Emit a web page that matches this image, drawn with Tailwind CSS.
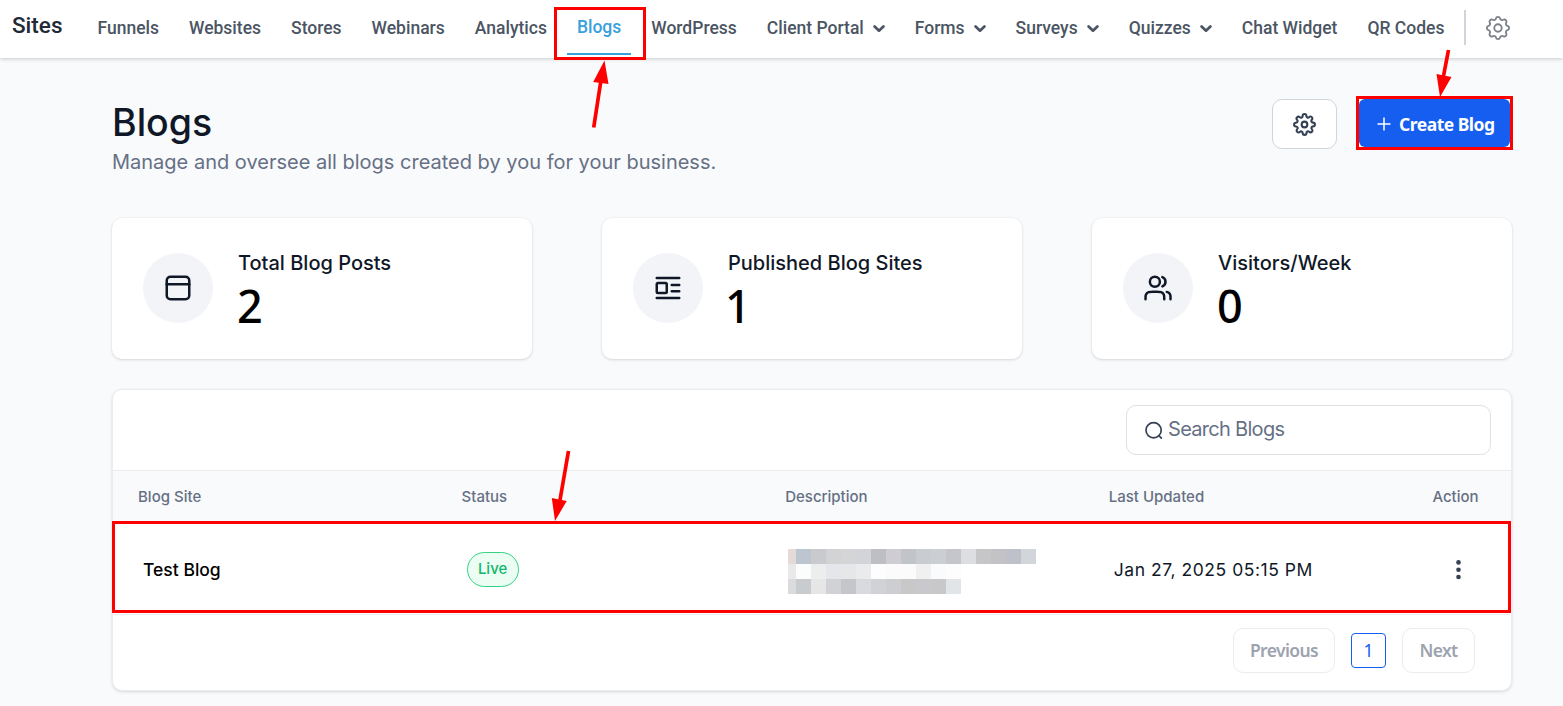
<!DOCTYPE html>
<html lang="en">
<head>
    <meta charset="UTF-8">
    <meta name="viewport" content="width=device-width, initial-scale=1.0">
    <title>Blogs - Sites</title>
    <script src="https://cdn.jsdelivr.net/npm/@tailwindcss/browser@4"></script>
</head>
<body class="relative h-[706px] overflow-hidden bg-[#f9fafb] font-['Inter',sans-serif] text-[#101828]">
    <!-- Top navigation -->
    <header class="relative flex h-[58px] items-center bg-white pl-3 font-['Roboto',sans-serif] shadow-[0_1px_4px_rgba(0,0,0,0.2)]">
        <div class="w-[85.5px] pb-[7px] text-[22.5px] font-medium text-[#1f2937]">Sites</div>
        <nav class="flex items-center gap-[30px] whitespace-nowrap pb-px text-[17.5px] font-medium text-[#4b5563]">
            <a href="#">Funnels</a>
            <a href="#">Websites</a>
            <a href="#">Stores</a>
            <a href="#">Webinars</a>
            <a href="#">Analytics</a>
            <a href="#" class="relative pb-[2px] text-[#38a0db]">Blogs
                <span class="absolute -left-[10px] top-[39px] h-[2px] w-[64px] bg-[#38a0db]"></span>
            </a>
            <a href="#">WordPress</a>
            <a href="#" class="flex items-center gap-[9px]">Client Portal
                <svg class="h-[8px] w-[12px]" viewBox="0 0 12 8" fill="none" stroke="currentColor" stroke-width="2.7" stroke-linecap="round" stroke-linejoin="round"><path d="M1.6 1.500 6 5.700l4.400-4.200"/></svg>
            </a>
            <a href="#" class="flex items-center gap-[9px]">Forms
                <svg class="h-[8px] w-[12px]" viewBox="0 0 12 8" fill="none" stroke="currentColor" stroke-width="2.7" stroke-linecap="round" stroke-linejoin="round"><path d="M1.6 1.500 6 5.700l4.400-4.200"/></svg>
            </a>
            <a href="#" class="flex items-center gap-[9px]">Surveys
                <svg class="h-[8px] w-[12px]" viewBox="0 0 12 8" fill="none" stroke="currentColor" stroke-width="2.7" stroke-linecap="round" stroke-linejoin="round"><path d="M1.6 1.500 6 5.700l4.400-4.200"/></svg>
            </a>
            <a href="#" class="flex items-center gap-[9px]">Quizzes
                <svg class="h-[8px] w-[12px]" viewBox="0 0 12 8" fill="none" stroke="currentColor" stroke-width="2.7" stroke-linecap="round" stroke-linejoin="round"><path d="M1.6 1.500 6 5.700l4.400-4.200"/></svg>
            </a>
            <a href="#">Chat Widget</a>
            <a href="#">QR Codes</a>
        </nav>
        <div class="ml-auto mr-[52px] flex items-center gap-[19px] pb-[3px]">
            <span class="h-[35px] w-[2px] bg-[#d1d5db]"></span>
            <svg class="h-[26px] w-[26px] text-[#7d828a]" viewBox="1.500 1.500 21 21" fill="none" stroke="currentColor" stroke-width="1.5" stroke-linecap="round" stroke-linejoin="round">
                <path d="M10.325 4.317c.426-1.756 2.924-1.756 3.35 0a1.724 1.724 0 002.573 1.066c1.543-.94 3.31.826 2.37 2.37a1.724 1.724 0 001.065 2.572c1.756.426 1.756 2.924 0 3.35a1.724 1.724 0 00-1.066 2.573c.94 1.543-.826 3.31-2.37 2.37a1.724 1.724 0 00-2.572 1.065c-.426 1.756-2.924 1.756-3.35 0a1.724 1.724 0 00-2.573-1.066c-1.543.94-3.31-.826-2.37-2.37a1.724 1.724 0 00-1.065-2.572c-1.756-.426-1.756-2.924 0-3.35a1.724 1.724 0 001.066-2.573c-.94-1.543.826-3.31 2.37-2.37.996.608 2.296.07 2.572-1.065z"/>
                <circle cx="12" cy="12" r="3"/>
            </svg>
        </div>
    </header>

    <main class="ml-[112px] w-[1400px]">
        <!-- Page heading -->
        <section class="flex justify-between pt-[38px]">
            <div class="pt-[3px]">
                <h1 class="text-[37.5px] font-medium leading-[47px]">Blogs</h1>
                <p class="pt-px text-[20px] leading-[30px] text-[#667085]">Manage and oversee all blogs created by you for your business.</p>
            </div>
            <div class="-mr-px flex items-start gap-[19px]">
                <button class="mt-[3px] flex h-[50px] w-[65px] items-center justify-center rounded-[10px] border border-[#d0d5dd] bg-white text-[#344054]">
                    <svg class="h-[25px] w-[25px]" viewBox="0 0 24 24" fill="none" stroke="currentColor" stroke-width="2" stroke-linecap="round" stroke-linejoin="round">
                        <g transform="translate(1.090 1.090) scale(.909)" stroke-width="2.200">
                            <circle cx="12" cy="12" r="3"/>
                            <path d="M19.4 15a1.65 1.65 0 0 0 .33 1.82l.06.06a2 2 0 1 1-2.830 2.830l-.06-.06a1.65 1.65 0 0 0-1.820-.33 1.65 1.65 0 0 0-1 1.510V21a2 2 0 0 1-4 0v-.09A1.65 1.65 0 0 0 9 19.4a1.65 1.65 0 0 0-1.820.33l-.06.06a2 2 0 1 1-2.830-2.830l.06-.06a1.65 1.65 0 0 0 .33-1.820 1.65 1.65 0 0 0-1.510-1H3a2 2 0 0 1 0-4h.09A1.65 1.65 0 0 0 4.6 9a1.65 1.65 0 0 0-.33-1.820l-.06-.06a2 2 0 1 1 2.830-2.830l.06.06a1.65 1.65 0 0 0 1.820.33H9a1.65 1.65 0 0 0 1-1.510V3a2 2 0 0 1 4 0v.09a1.65 1.65 0 0 0 1 1.510 1.65 1.65 0 0 0 1.820-.33l.06-.06a2 2 0 1 1 2.830 2.830l-.06.06a1.65 1.65 0 0 0-.33 1.820V9a1.65 1.65 0 0 0 1.510 1H21a2 2 0 0 1 0 4h-.09a1.65 1.65 0 0 0-1.510 1z"/>
                        </g>
                    </svg>
                </button>
                <div class="h-[54px] w-[157px] border-[3px] border-[#ff0000] bg-white">
                    <button class="flex h-full w-full items-center rounded-[6px] bg-[#155eef] pl-[18px] font-['Noto_Sans',sans-serif] text-[17.5px] font-bold text-white">
                        <svg class="mr-[8px] mt-[2px] h-[14px] w-[14px]" viewBox="0 0 14 14" fill="none" stroke="currentColor" stroke-width="1.5"><path d="M7 0.500v13M0.500 7h13"/></svg>
                        <span class="pt-[2px] tracking-[-0.5px]">Create Blog</span>
                    </button>
                </div>
            </div>
        </section>

        <!-- Stats -->
        <section class="mt-[41px] flex gap-[70px]">
            <div class="flex h-[141px] w-[420px] items-center rounded-[10px] bg-white pl-[31px] shadow-[0_1px_3px_rgba(16,24,40,0.14),0_0_2px_rgba(16,24,40,0.06)]">
                <div class="-mt-px flex h-[70px] w-[70px] items-center justify-center rounded-full bg-[#f2f4f7]">
                    <svg class="h-[30px] w-[30px]" viewBox="0 0 24 24" fill="none" stroke="currentColor" stroke-width="2" stroke-linecap="round" stroke-linejoin="round"><rect x="3" y="3" width="18" height="18" rx="3"/><path d="M3 9h18"/></svg>
                </div>
                <div class="ml-[25px] pt-[5px]">
                    <div class="text-[20px] font-medium leading-[30px]">Total Blog Posts</div>
                    <div class="-ml-px font-['Noto_Sans',sans-serif] text-[45px] font-medium leading-[56px] text-black">2</div>
                </div>
            </div>
            <div class="flex h-[141px] w-[420px] items-center rounded-[10px] bg-white pl-[31px] shadow-[0_1px_3px_rgba(16,24,40,0.14),0_0_2px_rgba(16,24,40,0.06)]">
                <div class="-mt-px flex h-[70px] w-[70px] items-center justify-center rounded-full bg-[#f2f4f7]">
                    <svg class="h-[30px] w-[30px]" viewBox="0 0 24 24" fill="none" stroke="currentColor" stroke-width="2" stroke-linecap="round" stroke-linejoin="round"><path d="M21 9.500h-6M21 14.500h-6M21 4H3M21 20H3"/><rect x="3" y="8" width="8" height="8" rx="1"/></svg>
                </div>
                <div class="ml-[25px] pt-[5px]">
                    <div class="text-[20px] font-medium leading-[30px]">Published Blog Sites</div>
                    <div class="-ml-[3px] font-['Noto_Sans',sans-serif] text-[45px] font-medium leading-[56px] text-black">1</div>
                </div>
            </div>
            <div class="flex h-[141px] w-[420px] items-center rounded-[10px] bg-white pl-[31px] shadow-[0_1px_3px_rgba(16,24,40,0.14),0_0_2px_rgba(16,24,40,0.06)]">
                <div class="-mt-px flex h-[70px] w-[70px] items-center justify-center rounded-full bg-[#f2f4f7]">
                    <svg class="h-[30px] w-[30px]" viewBox="0 0 24 24" fill="none" stroke="currentColor" stroke-width="2" stroke-linecap="round" stroke-linejoin="round"><path d="M22 21v-2a4 4 0 0 0-3-3.870M15.500 3.290a4 4 0 0 1 0 7.420M17 21c0-1.860 0-2.800-.3-3.530a4 4 0 0 0-2.170-2.170C13.800 15 12.860 15 11 15H8c-1.860 0-2.800 0-3.530.3a4 4 0 0 0-2.170 2.170C2 18.200 2 19.140 2 21"/><circle cx="9.500" cy="7" r="4"/></svg>
                </div>
                <div class="ml-[25px] pt-[5px]">
                    <div class="text-[20px] font-medium leading-[30px]">Visitors/Week</div>
                    <div class="-ml-px font-['Noto_Sans',sans-serif] text-[45px] font-medium leading-[56px] text-black">0</div>
                </div>
            </div>
        </section>

        <!-- Blog table -->
        <section class="mt-[30px] h-[302px] rounded-[10px] border border-[#eaecf0] bg-white shadow-[0_1px_3px_rgba(16,24,40,0.15)]">
            <div class="flex h-[80px] justify-end pr-[20px] pt-[15px]">
                <div class="flex h-[50px] w-[365px] items-center rounded-[10px] border border-[#dfe1e6] pl-[17px] text-[20px] text-[#667085]">
                    <svg class="mr-[5px] h-[19px] w-[19px] text-[#344054]" viewBox="0 0 19 19" fill="none" stroke="currentColor" stroke-width="1.7" stroke-linecap="round"><circle cx="9.600" cy="9.300" r="7.600"/><path d="m15.100 14.800 2.300 2.300"/></svg>
                    <span class="-mt-[3px] tracking-[-0.7px]">Search Blogs</span>
                </div>
            </div>
            <div class="grid h-[51px] grid-cols-[323.6px_323.6px_323.6px_323.6px_auto] items-center border-t border-[#eaecf0] bg-[#f9fafb] pl-[25px] pt-[2px] text-[15px] font-medium text-[#667085]">
                <div>Blog Site</div>
                <div>Status</div>
                <div>Description</div>
                <div>Last Updated</div>
                <div>Action</div>
            </div>
            <div class="-ml-px grid h-[92px] w-[1399px] grid-cols-[323.6px_323.6px_323.6px_323.6px_auto] items-center border-[3px] border-[#ff0000] pl-[28px] pt-[5px] text-[17.5px]">
                <div class="pt-px font-medium text-black">Test Blog</div>
                <div>
                    <span class="flex h-[35px] w-[52px] items-center justify-center rounded-full border border-[#32d583] bg-[#ecfdf3] pb-px text-[15px] font-medium text-[#12b76a]">Live</span>
                </div>
                <!-- hidden description -->
                <div id="mosaic" class="-ml-[2px] mt-[3px] flex flex-col"></div>
                <div class="pt-px tracking-[0.54px]">Jan 27, 2025 05:15 PM</div>
                <div class="flex pl-[12px] text-[#344054]">
                    <svg class="h-[20px] w-[20px]" viewBox="0 0 20 20" fill="currentColor"><circle cx="9.500" cy="2.400" r="2.300"/><circle cx="9.500" cy="9.700" r="2.300"/><circle cx="9.500" cy="17" r="2.300"/></svg>
                </div>
            </div>
            <div class="mt-px flex h-[71px] items-center justify-end gap-[16px] border-t border-[#eaecf0] pr-[36px] font-['Noto_Sans',sans-serif] text-[17.5px] font-semibold text-[#9ca3af]">
                <button class="h-[45px] w-[102px] rounded-[10px] border border-[#eaecf0] tracking-[-0.62px]">Previous</button>
                <button class="h-[35px] w-[35px] rounded-[4px] border border-[#155eef] font-normal text-[#155eef]">1</button>
                <button class="h-[45px] w-[73px] rounded-[10px] border border-[#eaecf0] tracking-[-0.62px]">Next</button>
            </div>
        </section>
    </main>

    <!-- Callout marks -->
    <div class="absolute left-[554px] top-[7px] h-[53px] w-[92px] border-[3px] border-[#ff0000]"></div>
    <svg class="pointer-events-none absolute left-0 top-0 h-[706px] w-[1563px]" viewBox="0 0 1563 706" fill="#ff0000" stroke="#ff0000">
        <path d="M593.700 127.500 600.700 82M1448.500 50 1443.500 76M568.500 451 560 500" stroke-width="3.700" fill="none"/>
        <path d="M604.500 60.500 593.200 82 608.500 84ZM1440 97 1436.500 74 1451.500 77ZM555 521 551.800 498 566.700 501Z" stroke="none"/>
    </svg>

    <script>
        const rows = [
            ['#e4dbd8', '#bdc5d0', '#c9cacd', '#d3d3d5', '#d5d4d6', '#d3d4d9', '#bebfc4', '#cfcdd2', '#c1c5ca', '#c9ccd1', '#cbced3', '#c5c6cc', '#dddee1', '#c6c6c8', '#c3c2c4', '#bec0ca', '#d2d5da'],
            ['#e9e9e9', '#fafdfc', '#eceeee', '#e4e6eb', '#e6e7e9', '#eaebed', '#fdfdfd', '#fbfbfb', '#fbfbfb', '#f0f0f0', '#f9fbfd', '#fdfdfd'],
            ['#dbdbdd', '#c8cccf', '#e6e6e6', '#d1d2d6', '#c5c6ca', '#d9dadf', '#d1d2d6', '#cdced1', '#c8c8c9', '#c9c9cd', '#c8c8cb', '#e1e5e8']
        ];
        const mosaic = document.getElementById('mosaic');
        rows.forEach(colors => {
            const row = document.createElement('div');
            row.className = 'flex h-[15px]';
            colors.forEach((color, i) => {
                const cell = document.createElement('span');
                cell.className = i === 0 ? 'w-[8px]' : 'w-[15px]';
                cell.style.backgroundColor = color;
                row.appendChild(cell);
            });
            mosaic.appendChild(row);
        });
    </script>
</body>
</html>
